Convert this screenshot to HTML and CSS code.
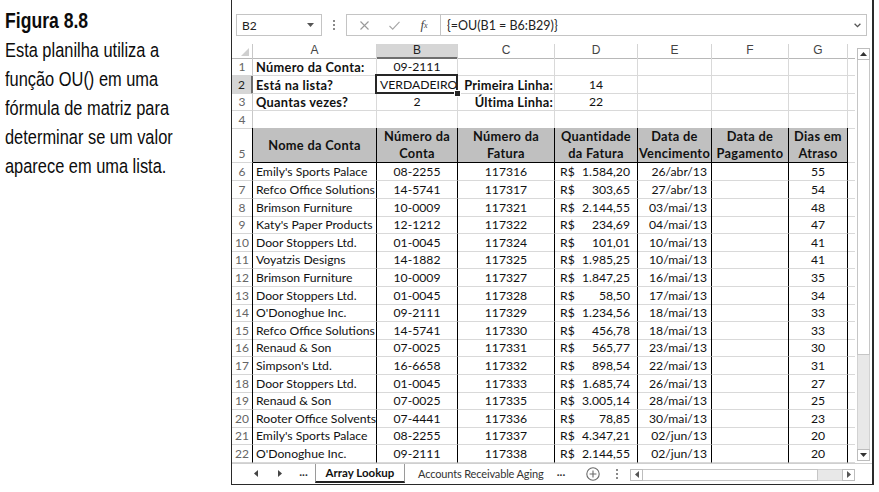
FILE: index.html
```html
<!DOCTYPE html>
<html lang="pt">
<head>
<meta charset="utf-8">
<title>Figura 8.8</title>
<link rel="stylesheet" href="styles.css">
</head>
<body>
<div class="page">
  <div class="caption">
    <div class="caption-text">
      <b>Figura 8.8</b><br>
      Esta planilha utiliza a<br>
      função OU() em uma<br>
      fórmula de matriz para<br>
      determinar se um valor<br>
      aparece em uma lista.
    </div>
  </div>

  <div class="sheet">
    <div class="fbar">
      <div class="namebox"><span>B2</span>
        <svg class="nb-arrow" width="7" height="4" viewBox="0 0 7 4"><path d="M0 0h7L3.5 4z" fill="#555"/></svg>
      </div>
      <div class="vdots"><i></i><i></i><i></i></div>
      <div class="fx-icons">
        <span class="ic"><svg width="9" height="9" viewBox="0 0 9 9"><path d="M0.5 0.5l8 8M8.5 0.5l-8 8" stroke="#9a9a9a" stroke-width="1.1" fill="none"/></svg></span>
        <span class="ic"><svg width="11" height="9" viewBox="0 0 11 9"><path d="M0.5 5l3.2 3.2L10.5 0.8" stroke="#a6a6a6" stroke-width="1.1" fill="none"/></svg></span>
        <span class="ic fx"><i>f</i><sub>x</sub></span>
      </div>
      <div class="formula"><span>{=OU(B1 = B6:B29)}</span>
        <svg class="f-chev" width="7" height="5" viewBox="0 0 7 5"><path d="M0.6 0.8l2.9 2.9 2.9-2.9" stroke="#555" stroke-width="1.3" fill="none"/></svg>
      </div>
    </div>

    <div class="main">
      <div class="grid">
        <div class="row colhdr">
          <div class="corner"><svg width="8" height="8" viewBox="0 0 8 8"><path d="M8 0V8H0z" fill="#cfcfcf"/></svg></div>
          <div class="ch">A</div><div class="ch sel-h">B</div><div class="ch">C</div><div class="ch">D</div><div class="ch">E</div><div class="ch">F</div><div class="ch">G</div><div class="ch last"></div>
        </div>

        <div class="row">
          <div class="rh">1</div>
          <div class="c bold">Número da Conta:</div><div class="c ctr">09-2111</div><div class="c"></div><div class="c"></div><div class="c"></div><div class="c"></div><div class="c"></div><div class="c h"></div>
        </div>
        <div class="row">
          <div class="rh sel-r">2</div>
          <div class="c bold">Está na lista?</div><div class="c ctr sel">VERDADEIRO</div><div class="c bold rt">Primeira Linha:</div><div class="c ctr">14</div><div class="c"></div><div class="c"></div><div class="c"></div><div class="c h"></div>
        </div>
        <div class="row">
          <div class="rh">3</div>
          <div class="c bold">Quantas vezes?</div><div class="c ctr">2</div><div class="c bold rt">Última Linha:</div><div class="c ctr">22</div><div class="c"></div><div class="c"></div><div class="c"></div><div class="c h"></div>
        </div>
        <div class="row r4">
          <div class="rh">4</div>
          <div class="c"></div><div class="c"></div><div class="c"></div><div class="c"></div><div class="c"></div><div class="c"></div><div class="c"></div><div class="c h"></div>
        </div>

        <div class="row t thead">
          <div class="rh">5</div>
          <div class="c th">Nome da Conta</div>
          <div class="c th">Número da<br>Conta</div>
          <div class="c th">Número da<br>Fatura</div>
          <div class="c th">Quantidade<br>da Fatura</div>
          <div class="c th">Data de<br>Vencimento</div>
          <div class="c th">Data de<br>Pagamento</div>
          <div class="c th">Dias em<br>Atraso</div>
          <div class="c h"></div>
        </div>

        <div class="row t"><div class="rh">6</div><div class="c">Emily's Sports Palace</div><div class="c ctr">08-2255</div><div class="c ctr">117316</div><div class="c acc"><span>R$</span><span>1.584,20</span></div><div class="c rt dt">26/abr/13</div><div class="c"></div><div class="c ctr">55</div><div class="c h"></div></div>
        <div class="row t"><div class="rh">7</div><div class="c">Refco Office Solutions</div><div class="c ctr">14-5741</div><div class="c ctr">117317</div><div class="c acc"><span>R$</span><span>303,65</span></div><div class="c rt dt">27/abr/13</div><div class="c"></div><div class="c ctr">54</div><div class="c h"></div></div>
        <div class="row t"><div class="rh">8</div><div class="c">Brimson Furniture</div><div class="c ctr">10-0009</div><div class="c ctr">117321</div><div class="c acc"><span>R$</span><span>2.144,55</span></div><div class="c rt dt">03/mai/13</div><div class="c"></div><div class="c ctr">48</div><div class="c h"></div></div>
        <div class="row t"><div class="rh">9</div><div class="c">Katy's Paper Products</div><div class="c ctr">12-1212</div><div class="c ctr">117322</div><div class="c acc"><span>R$</span><span>234,69</span></div><div class="c rt dt">04/mai/13</div><div class="c"></div><div class="c ctr">47</div><div class="c h"></div></div>
        <div class="row t"><div class="rh">10</div><div class="c">Door Stoppers Ltd.</div><div class="c ctr">01-0045</div><div class="c ctr">117324</div><div class="c acc"><span>R$</span><span>101,01</span></div><div class="c rt dt">10/mai/13</div><div class="c"></div><div class="c ctr">41</div><div class="c h"></div></div>
        <div class="row t"><div class="rh">11</div><div class="c">Voyatzis Designs</div><div class="c ctr">14-1882</div><div class="c ctr">117325</div><div class="c acc"><span>R$</span><span>1.985,25</span></div><div class="c rt dt">10/mai/13</div><div class="c"></div><div class="c ctr">41</div><div class="c h"></div></div>
        <div class="row t"><div class="rh">12</div><div class="c">Brimson Furniture</div><div class="c ctr">10-0009</div><div class="c ctr">117327</div><div class="c acc"><span>R$</span><span>1.847,25</span></div><div class="c rt dt">16/mai/13</div><div class="c"></div><div class="c ctr">35</div><div class="c h"></div></div>
        <div class="row t"><div class="rh">13</div><div class="c">Door Stoppers Ltd.</div><div class="c ctr">01-0045</div><div class="c ctr">117328</div><div class="c acc"><span>R$</span><span>58,50</span></div><div class="c rt dt">17/mai/13</div><div class="c"></div><div class="c ctr">34</div><div class="c h"></div></div>
        <div class="row t"><div class="rh">14</div><div class="c">O'Donoghue Inc.</div><div class="c ctr">09-2111</div><div class="c ctr">117329</div><div class="c acc"><span>R$</span><span>1.234,56</span></div><div class="c rt dt">18/mai/13</div><div class="c"></div><div class="c ctr">33</div><div class="c h"></div></div>
        <div class="row t"><div class="rh">15</div><div class="c">Refco Office Solutions</div><div class="c ctr">14-5741</div><div class="c ctr">117330</div><div class="c acc"><span>R$</span><span>456,78</span></div><div class="c rt dt">18/mai/13</div><div class="c"></div><div class="c ctr">33</div><div class="c h"></div></div>
        <div class="row t"><div class="rh">16</div><div class="c">Renaud &amp; Son</div><div class="c ctr">07-0025</div><div class="c ctr">117331</div><div class="c acc"><span>R$</span><span>565,77</span></div><div class="c rt dt">23/mai/13</div><div class="c"></div><div class="c ctr">30</div><div class="c h"></div></div>
        <div class="row t"><div class="rh">17</div><div class="c">Simpson's Ltd.</div><div class="c ctr">16-6658</div><div class="c ctr">117332</div><div class="c acc"><span>R$</span><span>898,54</span></div><div class="c rt dt">22/mai/13</div><div class="c"></div><div class="c ctr">31</div><div class="c h"></div></div>
        <div class="row t"><div class="rh">18</div><div class="c">Door Stoppers Ltd.</div><div class="c ctr">01-0045</div><div class="c ctr">117333</div><div class="c acc"><span>R$</span><span>1.685,74</span></div><div class="c rt dt">26/mai/13</div><div class="c"></div><div class="c ctr">27</div><div class="c h"></div></div>
        <div class="row t"><div class="rh">19</div><div class="c">Renaud &amp; Son</div><div class="c ctr">07-0025</div><div class="c ctr">117335</div><div class="c acc"><span>R$</span><span>3.005,14</span></div><div class="c rt dt">28/mai/13</div><div class="c"></div><div class="c ctr">25</div><div class="c h"></div></div>
        <div class="row t"><div class="rh">20</div><div class="c">Rooter Office Solvents</div><div class="c ctr">07-4441</div><div class="c ctr">117336</div><div class="c acc"><span>R$</span><span>78,85</span></div><div class="c rt dt">30/mai/13</div><div class="c"></div><div class="c ctr">23</div><div class="c h"></div></div>
        <div class="row t"><div class="rh">21</div><div class="c">Emily's Sports Palace</div><div class="c ctr">08-2255</div><div class="c ctr">117337</div><div class="c acc"><span>R$</span><span>4.347,21</span></div><div class="c rt dt">02/jun/13</div><div class="c"></div><div class="c ctr">20</div><div class="c h"></div></div>
        <div class="row t"><div class="rh">22</div><div class="c">O'Donoghue Inc.</div><div class="c ctr">09-2111</div><div class="c ctr">117338</div><div class="c acc"><span>R$</span><span>2.144,55</span></div><div class="c rt dt">02/jun/13</div><div class="c"></div><div class="c ctr">20</div><div class="c h"></div></div>
      </div>

      <div class="vscroll">
        <div class="sb-btn"><svg width="7" height="4" viewBox="0 0 7 4"><path d="M0 4h7L3.5 0z" fill="#333"/></svg></div>
        <div class="sb-thumb"></div>
        <div class="sb-track"></div>
        <div class="sb-btn"><svg width="7" height="4" viewBox="0 0 7 4"><path d="M0 0h7L3.5 4z" fill="#333"/></svg></div>
      </div>
    </div>

    <div class="tabbar">
      <div class="nav"><svg width="4" height="7" viewBox="0 0 4 7"><path d="M4 0v7L0 3.5z" fill="#444"/></svg></div>
      <div class="nav"><svg width="4" height="7" viewBox="0 0 4 7"><path d="M0 0v7l4-3.5z" fill="#444"/></svg></div>
      <div class="nav dots">...</div>
      <div class="tab active">Array Lookup</div>
      <div class="tab">Accounts Receivable Aging</div>
      <div class="nav dots">...</div>
      <div class="plus"><svg width="14" height="14" viewBox="0 0 14 14"><circle cx="7" cy="7" r="6.2" stroke="#6a6a6a" stroke-width="1.1" fill="none"/><path d="M7 3.6v6.8M3.6 7h6.8" stroke="#6a6a6a" stroke-width="1.1"/></svg></div>
      <div class="vdots small"><i></i><i></i><i></i></div>
      <div class="hscroll">
        <div class="hs-btn"><svg width="4" height="7" viewBox="0 0 4 7"><path d="M4 0v7L0 3.5z" fill="#555"/></svg></div>
        <div class="hs-thumb"></div>
        <div class="hs-track"></div>
        <div class="hs-btn"><svg width="4" height="7" viewBox="0 0 4 7"><path d="M0 0v7l4-3.5z" fill="#555"/></svg></div>
      </div>
    </div>
  </div>
</div>
</body>
</html>
```

FILE: styles.css
```css
html, body {
  margin: 0;
  padding: 0;
  background: #ffffff;
}

.page {
  display: flex;
  align-items: flex-start;
}

.caption {
  width: 226px;
  padding: 7px 0 0 5px;
  overflow: hidden;
}

.caption-text {
  font-family: "Liberation Sans", "Arial", sans-serif;
  font-size: 20.5px;
  line-height: 28.9px;
  color: #0c0c0c;
  white-space: nowrap;
  transform: scaleX(0.8);
  transform-origin: 0 0;
}

.caption-text b {
  font-size: 22px;
  font-weight: 700;
}

.sheet {
  width: 643px;
  height: 485px;
  box-sizing: border-box;
  border-left: 1px solid #2a2a2a;
  border-right: 2px solid #2a2a2a;
  border-bottom: 1px solid #2a2a2a;
  display: flex;
  flex-direction: column;
  font-family: "Lato", "Liberation Sans", sans-serif;
  color: #111;
}

/* formula bar */
.fbar {
  height: 44px;
  box-sizing: border-box;
  padding-top: 14px;
  display: flex;
  align-items: flex-start;
}

.namebox {
  margin-left: 4px;
  width: 86px;
  height: 22px;
  box-sizing: border-box;
  border: 1px solid #c4c4c4;
  display: flex;
  align-items: center;
  justify-content: space-between;
  padding: 0 7px 0 5px;
  font-size: 12px;
  color: #222;
}

.vdots {
  width: 24px;
  height: 22px;
  display: flex;
  flex-direction: column;
  align-items: center;
  justify-content: center;
  gap: 2px;
}

.vdots i {
  display: block;
  width: 2px;
  height: 2px;
  background: #8a8a8a;
}

.fx-icons {
  width: 94px;
  height: 22px;
  box-sizing: border-box;
  border: 1px solid #c4c4c4;
  border-right: none;
  display: flex;
  align-items: center;
  padding-left: 2px;
}

.ic {
  width: 30px;
  display: flex;
  justify-content: center;
  align-items: center;
}

.fx {
  font-family: "Liberation Serif", serif;
  font-size: 13px;
  color: #444;
}

.fx sub {
  font-size: 8px;
  font-style: italic;
  vertical-align: -1px;
}

.formula {
  width: 427px;
  height: 22px;
  box-sizing: border-box;
  border: 1px solid #c4c4c4;
  display: flex;
  align-items: center;
  justify-content: space-between;
  padding: 0 5px 0 6px;
  font-size: 12.5px;
  color: #222;
}

/* grid */
.main {
  display: flex;
  height: 418.6px;
}

.grid {
  width: 623px;
}

.row {
  display: grid;
  grid-template-columns: 21px 124px 81px 97px 83px 74px 77px 59px 7px;
  height: 17.6px;
  font-size: 12.2px;
}

.row.colhdr {
  height: 14px;
}

.corner {
  border-right: 1px solid #c8c8c8;
  border-bottom: 1px solid #b8b8b8;
  display: flex;
  align-items: flex-end;
  justify-content: flex-end;
  padding: 0 3px 2px 0;
}

.ch {
  border-right: 1px solid #d4d4d4;
  border-bottom: 1px solid #b8b8b8;
  font-family: "Liberation Sans", sans-serif;
  font-size: 12px;
  line-height: 13px;
  text-align: center;
  color: #444;
}

.ch.last {
  border-right: none;
}

.ch.sel-h {
  background: #d6d6d6;
  border-bottom: 2px solid #6e6e6e;
  color: #222;
}

.rh {
  border-right: 1px solid #c8c8c8;
  border-bottom: 1px solid #d6d6d6;
  font-size: 12px;
  color: #666;
  text-align: center;
  line-height: 17px;
}

.rh.sel-r {
  background: #d6d6d6;
  border-right: 2px solid #6e6e6e;
  color: #222;
}

.c {
  border-right: 1px solid #d9d9d9;
  border-bottom: 1px solid #d9d9d9;
  padding: 1px 3px 0;
  line-height: 16px;
  white-space: nowrap;
  overflow: visible;
}

.c.h {
  border-right: none;
}

.bold {
  font-weight: 700;
  font-size: 12.8px;
  letter-spacing: 0.3px;
}

.ctr {
  text-align: center;
}

.rt {
  text-align: right;
  padding-right: 2px;
}

.bold.rt {
  padding-right: 1px;
  letter-spacing: 0.25px;
}

.dt {
  padding-right: 4px;
}

.acc {
  display: flex;
  justify-content: space-between;
  padding: 1px 7px 0 5px;
}

.sel {
  position: relative;
}

.sel::after {
  content: "";
  position: absolute;
  left: -2px;
  top: -2px;
  right: -1px;
  bottom: -1px;
  border: 2px solid #262626;
}

.sel::before {
  content: "";
  position: absolute;
  right: -4px;
  bottom: -4px;
  width: 5px;
  height: 5px;
  background: #262626;
  border: 1px solid #fff;
  z-index: 2;
}

/* table area */
.r4 .c:not(.h) {
  border-bottom-color: #000;
}

.row.t .rh {
  border-right-color: #000;
}

.row.t .c:not(.h) {
  border-right-color: #000;
}

.row.thead {
  height: 35px;
}

.thead .rh {
  display: flex;
  align-items: flex-end;
  justify-content: center;
  line-height: 16px;
}

.thead .c.th {
  background: #c0c0c0;
  border-bottom-color: #000;
  font-weight: 700;
  font-size: 12.8px;
  letter-spacing: 0.3px;
  text-align: center;
  line-height: 17px;
  display: flex;
  align-items: center;
  justify-content: center;
  padding: 0;
}

/* vertical scrollbar */
.vscroll {
  width: 17px;
  box-sizing: border-box;
  padding: 4px 2px 2px 2px;
  display: flex;
  flex-direction: column;
}

.sb-btn {
  height: 12px;
  box-sizing: border-box;
  border: 1px solid #bdbdbd;
  display: flex;
  align-items: center;
  justify-content: center;
  background: #fff;
}

.sb-thumb {
  height: 295px;
  box-sizing: border-box;
  border: 1px solid #c6c6c6;
  border-top: none;
  background: #fff;
}

.sb-track {
  flex: 1;
  background: #e8e8e8;
  border-left: 1px solid #d2d2d2;
  border-right: 1px solid #d2d2d2;
}

/* sheet tabs */
.tabbar {
  flex: 1;
  display: flex;
  align-items: stretch;
  border-top: 1px solid #cfcfcf;
  font-size: 11px;
  color: #333;
}

.nav {
  width: 24px;
  display: flex;
  align-items: center;
  justify-content: center;
}

.nav:first-child {
  margin-left: 12px;
}

.nav.dots {
  width: 23px;
  font-size: 12px;
  font-weight: 700;
  color: #333;
  line-height: 1;
  padding-bottom: 3px;
  box-sizing: border-box;
}

.tab {
  display: flex;
  align-items: center;
  padding: 0 0 1px 13px;
  width: 148px;
  box-sizing: border-box;
  white-space: nowrap;
  letter-spacing: -0.15px;
}

.tab.active {
  width: 90px;
  padding: 0;
  justify-content: center;
  border-left: 1px solid #9a9a9a;
  border-right: 1px solid #9a9a9a;
  border-bottom: 2px solid #222;
  margin-bottom: 1px;
  font-size: 11.5px;
  font-weight: 700;
  letter-spacing: 0;
  color: #111;
}

.tabbar .tab + .nav.dots {
  width: 16px;
}

.plus {
  margin-left: 16px;
  width: 16px;
  display: flex;
  align-items: center;
  justify-content: center;
}

.vdots.small {
  margin-left: 8px;
  width: 16px;
  height: auto;
}

.hscroll {
  margin-left: 5px;
  margin-top: 5px;
  width: 225px;
  height: 12px;
  display: flex;
}

.hs-btn {
  width: 13px;
  box-sizing: border-box;
  border: 1px solid #bdbdbd;
  display: flex;
  align-items: center;
  justify-content: center;
}

.hs-thumb {
  width: 175px;
  box-sizing: border-box;
  border: 1px solid #c6c6c6;
  border-left: none;
}

.hs-track {
  flex: 1;
  background: #e8e8e8;
  border-top: 1px solid #d2d2d2;
  border-bottom: 1px solid #d2d2d2;
}
```
